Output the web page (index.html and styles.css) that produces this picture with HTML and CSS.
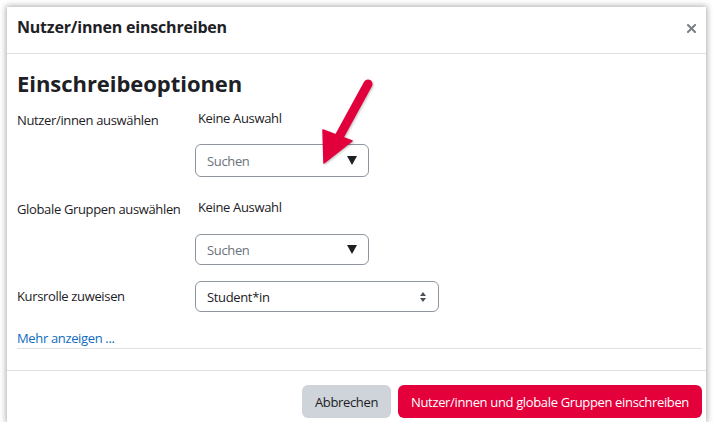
FILE: index.html
```html
<!DOCTYPE html>
<html lang="de">
<head>
<meta charset="utf-8">
<title>Nutzer/innen einschreiben</title>
<link rel="stylesheet" href="styles.css">
</head>
<body>
<div class="modal">
  <div class="modal-header">
    <h5 class="modal-title">Nutzer/innen einschreiben</h5>
    <span class="close" aria-label="Schließen">
      <svg width="9" height="9" viewBox="0 0 9 9"><path d="M1 1 L8 8 M8 1 L1 8" stroke="#7b7f83" stroke-width="2" stroke-linecap="square"/></svg>
    </span>
  </div>
  <div class="modal-body">
    <h3 class="heading">Einschreibeoptionen</h3>
    <div class="row row-first">
      <div class="label">Nutzer/innen auswählen</div>
      <div class="field">
        <div class="selection">Keine Auswahl</div>
        <div class="search search-tall">
          <span class="placeholder">Suchen</span>
          <svg class="down" width="10" height="9" viewBox="0 0 10 9"><polygon points="0,0 10,0 5,9" fill="#1d2125"/></svg>
        </div>
      </div>
    </div>
    <div class="row row-second">
      <div class="label">Globale Gruppen auswählen</div>
      <div class="field">
        <div class="selection">Keine Auswahl</div>
        <div class="search">
          <span class="placeholder">Suchen</span>
          <svg class="down" width="10" height="9" viewBox="0 0 10 9"><polygon points="0,0 10,0 5,9" fill="#1d2125"/></svg>
        </div>
      </div>
    </div>
    <div class="row row-third">
      <div class="label label-role">Kursrolle zuweisen</div>
      <div class="field">
        <div class="custom-select">
          <span>Student*in</span>
          <svg class="updown" width="6" height="10" viewBox="0 0 6 10"><polygon points="3,0 6,4 0,4" fill="#495057"/><polygon points="0,6 6,6 3,10" fill="#495057"/></svg>
        </div>
      </div>
    </div>
    <div class="more"><a href="#" class="more-link">Mehr anzeigen ...</a></div>
  </div>
  <div class="modal-footer">
    <button class="btn btn-secondary">Abbrechen</button>
    <button class="btn btn-primary">Nutzer/innen und globale Gruppen einschreiben</button>
  </div>
</div>
<svg class="annotation" width="715" height="432" viewBox="0 0 715 432">
  <line x1="368" y1="84" x2="339" y2="137" stroke="#e2003c" stroke-width="9" stroke-linecap="round"/>
  <polygon points="323,130 352,141 324,163" fill="#e2003c" stroke="#e2003c" stroke-width="1.5" stroke-linejoin="round"/>
</svg>
</body>
</html>
```

FILE: styles.css
```css
* { box-sizing: border-box; }

body {
  margin: 0;
  background: #fff;
  font-family: "Open Sans", "Noto Sans", sans-serif;
  font-size: 13px;
  line-height: 20px;
  letter-spacing: -0.35px;
  color: #1d2125;
}

.modal {
  margin: 7px 0 0 7px;
  width: 699px;
  height: 415px;
  background: #fff;
  box-shadow: 0 0 6px 1px rgba(0, 0, 0, 0.33);
  display: flex;
  flex-direction: column;
}

.modal-header {
  height: 47px;
  flex: none;
  display: flex;
  align-items: flex-start;
  justify-content: space-between;
  padding: 8px 10px 0 10px;
  border-bottom: 1px solid #dee2e6;
}

.modal-title {
  margin: 0;
  font-size: 16px;
  line-height: 24px;
  font-weight: 700;
  letter-spacing: -0.2px;
}

.close {
  display: flex;
  margin-top: 9px;
  margin-right: 0;
}

.modal-body {
  flex: 1;
  padding: 0 4px 0 10px;
  border-bottom: 1px solid #dee2e6;
}

.heading {
  margin: 15px 0 0 0;
  font-size: 22px;
  line-height: 28px;
  font-weight: 700;
  letter-spacing: -0.05px;
}

.row {
  display: flex;
}

.row-first { margin-top: 11px; }
.row-second { margin-top: 20px; }
.row-third { margin-top: 16px; }

.label {
  width: 178px;
  flex: none;
  padding-top: 2px;
}

.label-role { padding-top: 5px; }

.selection {
  padding-left: 3px;
}

.search {
  margin-top: 17px;
  width: 174px;
  height: 31px;
  border: 1px solid #8f959e;
  border-radius: 6px;
  display: flex;
  align-items: center;
  justify-content: space-between;
  padding: 0 11px 0 11px;
}

.search-tall {
  margin-top: 16px;
  height: 33px;
}

.placeholder {
  color: #6a737b;
}

.custom-select {
  width: 244px;
  height: 31px;
  border: 1px solid #8f959e;
  border-radius: 6px;
  display: flex;
  align-items: center;
  justify-content: space-between;
  padding: 0 12px 0 11px;
}

.more {
  margin-top: 16px;
  border-bottom: 1px solid #dee2e6;
}

.more-link {
  color: #0f6cbf;
  text-decoration: none;
}

.modal-footer {
  flex: none;
  height: 51px;
  display: flex;
  justify-content: flex-end;
  align-items: flex-start;
  gap: 7px;
  padding: 14px 4px 0 0;
}

.btn {
  font-family: inherit;
  font-size: 13px;
  line-height: 20px;
  letter-spacing: -0.35px;
  height: 33px;
  border: none;
  border-radius: 6px;
  padding: 0 13px;
}

.btn-secondary {
  background: #ced4da;
  color: #1d2125;
}

.btn-primary {
  background: #e4003b;
  color: #fff;
}

.annotation {
  position: absolute;
  left: 0;
  top: 0;
  pointer-events: none;
  filter: drop-shadow(1px 1px 1px rgba(0, 0, 0, 0.25));
}
```
